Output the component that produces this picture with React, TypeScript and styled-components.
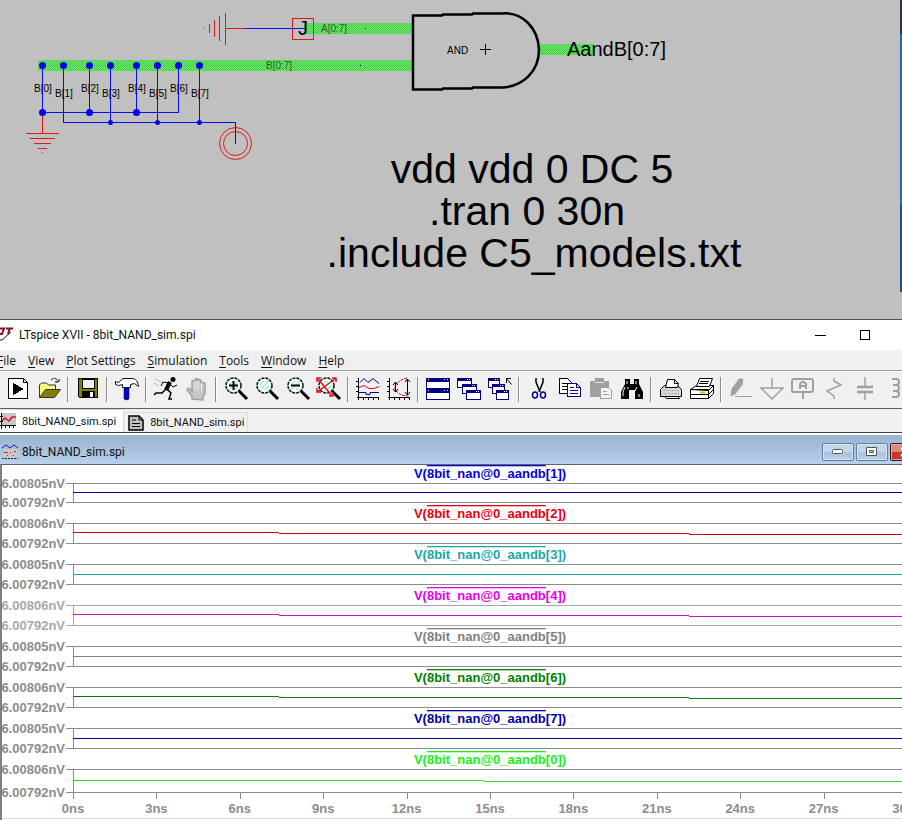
import React from "react";
import styled, { createGlobalStyle } from "styled-components";

const GlobalStyle = createGlobalStyle`
  * { box-sizing: border-box; }
  body { margin: 0; background: #f0f0f0; overflow: hidden; }
`;

const uiFont = '"Open Sans", "Noto Sans", sans-serif';
const docFont = 'Roboto, "Open Sans", sans-serif';
const plotFont = '"Liberation Sans", Arial, sans-serif';

const Screen = styled.div`
  display: flex;
  flex-direction: column;
  min-height: 100vh;
  overflow: hidden;
  font-family: ${uiFont};
  font-size: 12px;
  color: #111;
`;

/* ---------- Schematic ---------- */

const SchematicRow = styled.section`
  display: flex;
  height: 319px;
  background: #c0c0c0;
`;

const SchematicSvg = styled.svg`
  flex: 1;
  min-width: 0;
  height: 100%;
  font-family: ${plotFont};
`;

const DesktopEdge = styled.div`
  flex: none;
  width: 2px;
  height: 292px;
  background: linear-gradient(#24364e 0 34px, #1d6ea5 34px 205px, #1a4f86 205px);
`;

const topTaps = [
  { x: 42, label: "B[0]", low: false },
  { x: 63, label: "B[1]", low: true },
  { x: 89, label: "B[2]", low: false },
  { x: 110, label: "B[3]", low: true },
  { x: 136, label: "B[4]", low: false },
  { x: 157, label: "B[5]", low: true },
  { x: 178, label: "B[6]", low: false },
  { x: 199, label: "B[7]", low: true },
];

function Schematic() {
  return (
    <SchematicRow>
      <SchematicSvg role="img" aria-label="8-bit AND schematic">
        <defs>
          <pattern id="bus" width="2" height="2" patternUnits="userSpaceOnUse">
            <rect width="2" height="2" fill="#84d884" />
            <rect width="1" height="1" fill="#34dc34" />
            <rect x="1" y="1" width="1" height="1" fill="#34dc34" />
          </pattern>
        </defs>
        <rect x="304" y="23" width="109" height="11" fill="url(#bus)" />
        <rect x="38" y="60" width="375" height="11" fill="url(#bus)" />
        <rect x="538" y="44" width="56" height="11" fill="url(#bus)" />

        <g fill="none" stroke="#e01818" shapeRendering="crispEdges">
          <path d="M204 28.500h1M209.500 24v9M214.500 20v17M219.500 16v25M225.500 13v32M226 28.500h19" />
          <rect x="292.500" y="18.500" width="21" height="21" />
          <path d="M42.500 114v19M26 133.500h33M30 138.500h25M34 143.500h17M38 148.500h9M42 152.500h1" />
        </g>
        <g fill="none" stroke="#e01818">
          <circle cx="235.500" cy="143.500" r="16" />
          <circle cx="235.500" cy="143.500" r="12" />
        </g>
        <g fill="none" stroke="#0a0af0" shapeRendering="crispEdges">
          <path d="M245 28.500h60" />
          <path d="M42.500 65v48M89.500 65v48M136.500 65v48M178.500 65v47.500H42" />
          <path d="M110.500 65v57M157.500 65v57M199.500 65v57M63.500 65v57.500H235.500V144" />
        </g>
        <g fill="#0000f4">
          {topTaps.map((t) => (
            <circle key={t.label} cx={t.x + 0.5} cy="65.500" r="3.500" />
          ))}
          {[42, 89, 136].map((x) => (
            <circle key={x} cx={x + 0.5} cy="112.500" r="3.500" />
          ))}
          {[110, 157, 199].map((x) => (
            <circle key={x} cx={x + 0.5} cy="122.500" r="2.500" />
          ))}
        </g>

        <path
          d="M413 15.500h29l1-1h29l1-1h29c20-2 36 14 37 36c0 22-16 37-37 38h-29l-1 1h-29l-1 1h-29z"
          fill="none"
          stroke="#000"
          strokeWidth="2.500"
        />
        <path d="M480 49.500h11M485.500 44v11" stroke="#000" shapeRendering="crispEdges" />

        <g fontSize="10">
          {topTaps.map((t) => (
            <text key={t.label} x={t.x + 1} y={t.low ? 97 : 92} textAnchor="middle">
              {t.label}
            </text>
          ))}
          <text x="447" y="54">AND</text>
          <text x="321" y="32" fillOpacity="0.600">A[0:7]</text>
          <text x="266" y="69" fillOpacity="0.600">B[0:7]</text>
          <rect x="365" y="28" width="1" height="1" />
          <rect x="360" y="65" width="1" height="1" />
        </g>
        <text x="303" y="35" fontSize="20" textAnchor="middle">J</text>
        <text x="567" y="56" fontSize="20">AandB[0:7]</text>
        <g fontSize="41" textAnchor="middle">
          <text x="532" y="183">vdd vdd 0 DC 5</text>
          <text x="527" y="225">.tran 0 30n</text>
          <text x="534" y="267">.include C5_models.txt</text>
        </g>
      </SchematicSvg>
      <DesktopEdge />
    </SchematicRow>
  );
}

/* ---------- Application window chrome ---------- */

const AppWindow = styled.main`
  flex: 1;
  display: flex;
  flex-direction: column;
  border-top: 1px solid #505050;
  background: #f0f0f0;
`;

const TitleBar = styled.header`
  display: flex;
  align-items: center;
  height: 30px;
  background: #fff;
`;

const AppTitle = styled.h1`
  flex: 1;
  margin: 0 0 0 5px;
  font: 400 12px ${docFont};
`;

const WindowButtons = styled.div`
  display: flex;
  margin-right: -31px;
`;

const WindowButton = styled.button`
  display: flex;
  align-items: center;
  justify-content: center;
  width: 45px;
  height: 28px;
  padding: 0;
  border: 0;
  background: none;
`;

const MenuBar = styled.nav`
  display: flex;
  align-items: center;
  gap: 12px;
  height: 20px;
  margin-left: -3px;
`;

const MenuButton = styled.button`
  padding: 0;
  border: 0;
  background: none;
  color: inherit;
  font: inherit;
  u { text-underline-offset: 2px; }
`;

const ToolBar = styled.div`
  display: flex;
  align-items: flex-start;
  height: 39px;
  padding: 6px 0 0 2px;
  overflow: hidden;
  border-top: 1px solid #a0a0a0;
  border-bottom: 1px solid #606060;
  box-shadow: inset 0 1px #fff;
`;

const ToolButton = styled.button`
  flex: none;
  display: flex;
  width: 31px;
  padding: 0 3px 0 4px;
  border: 0;
  background: none;
  svg { width: 24px; height: 24px; overflow: visible; }
`;

const ToolSeparator = styled.span`
  flex: none;
  width: 8px;
  height: 25px;
  background: linear-gradient(90deg, transparent 3px, #8a8a8a 3px 4px, #fff 4px 5px, transparent 5px);
`;

const TabStrip = styled.div`
  display: flex;
  align-items: flex-end;
  height: 24px;
  border-bottom: 1px solid #404040;
`;

const Tab = styled.button<{ $active?: boolean }>`
  display: flex;
  align-items: center;
  gap: 6px;
  height: ${(p) => (p.$active ? 23 : 20)}px;
  padding: 0 ${(p) => (p.$active ? 7 : 3)}px 0 ${(p) => (p.$active ? 0 : 4)}px;
  border: 0;
  border-right: 1px solid #dcdcdc;
  border-top: 1px solid #dcdcdc;
  background: ${(p) => (p.$active ? "#fff" : "#f0f0f0")};
  color: inherit;
  font: 11px ${docFont};
`;

const Glyph = styled.svg`
  flex: none;
  width: 16px;
  height: 16px;
`;

const DocTitleBar = styled.header`
  display: flex;
  align-items: center;
  gap: 4px;
  height: 31px;
  padding: 4px 0 0 2px;
  border-top: 2px solid #fff;
  overflow: hidden;
  background: linear-gradient(#99b4d1, #b9d1ea);
`;

const DocTitle = styled.h2`
  flex: 1;
  margin: 0;
  font: 400 12px ${docFont};
`;

const DocButtons = styled.div`
  display: flex;
  gap: 2px;
  margin-right: -20px;
`;

const DocButton = styled.button<{ $danger?: boolean }>`
  display: flex;
  align-items: center;
  justify-content: center;
  width: 32px;
  height: 18px;
  padding: 0;
  border: 1px solid ${(p) => (p.$danger ? "#43161a" : "#5f7f9f")};
  border-radius: 2px;
  box-shadow: inset 0 0 0 1px ${(p) => (p.$danger ? "#e6a89c" : "#d8e6f4")};
  background: ${(p) =>
    p.$danger
      ? "linear-gradient(#dc8b7b 50%, #c0392b 50%)"
      : "linear-gradient(#c2d6ea 50%, #a6c1dd 50%, #b8d0e8)"};
`;

/* ---------- Icons ---------- */

const NAVY = "#000080";
const GREY = "#a0a0a0";

function Lens({ children }: { children?: React.ReactNode }) {
  return (
    <>
      <path d="M15 14l8 8" stroke="#000" strokeWidth="3" />
      <circle cx="9.500" cy="8.500" r="7.500" fill="#eefcfc" stroke="#111" strokeWidth="1.500" strokeDasharray="3 1" />
      <path d="M5 8l4-4M6 12l8-8M10 13l4-4" stroke="#7fdede" strokeWidth="1" />
      {children}
    </>
  );
}

const MiniWindow = ({ x, y, w = 14 }: { x: number; y: number; w?: number }) => (
  <g shapeRendering="crispEdges">
    <rect x={x + 0.5} y={y + 0.5} width={w} height="9" fill="#fff" stroke={NAVY} />
    <rect x={x} y={y} width={w + 1} height="3" fill={NAVY} />
    <path d={`M${x + w - 4} ${y + 1.5}h1m1 0h1`} stroke="#fff" />
  </g>
);

const icons: Record<string, React.ReactNode> = {
  run: (
    <g shapeRendering="crispEdges">
      <path d="M2.500 1.500h15l4 4v16h-19z" fill="#fff" stroke="#000" />
      <path d="M17.500 1.500v4h4" fill="none" stroke="#000" />
      <path d="M7 6v12l11-6z" fill="#000" />
    </g>
  ),
  open: (
    <>
      <path d="M2.500 20.500V8l2-2h5l2 2h7v4" fill="#ffff80" stroke="#333" />
      <path d="M2.500 20.500l6-8h15l-6 8z" fill="#808000" stroke="#333" />
      <path d="M14 3c3-3 6-2 7 2M18 5h4V1" fill="none" stroke="#000" strokeDasharray="3 1" />
    </>
  ),
  save: (
    <g shapeRendering="crispEdges">
      <path d="M2.500 1.500h19v19h-18l-1-1z" fill="#808000" stroke="#000" />
      <rect x="6" y="2" width="12" height="9" fill="#eee" stroke="#000" />
      <rect x="6" y="14" width="13" height="7" />
      <rect x="14" y="15" width="3" height="5" fill="#fff" />
    </g>
  ),
  hammer: (
    <>
      <path d="M9 10h5v12q-2 2-5 0z" fill="#0000c8" stroke="#000060" strokeWidth="0.500" />
      <path d="M.5 4.500l3 1L8 1.500h9c4 0 6 3 6.500 8l-4-3-4 1v3h-8v-3l-4 1-3-1z" fill="#fff" stroke="#111" />
    </>
  ),
  runner: (
    <>
      <circle cx="19" cy="2.500" r="2.500" />
      <path d="M16 5l-4 8" stroke="#000" strokeWidth="4" />
      <path d="M13 12l4 4-2 6h3M12 12l-4 4H2l-2 2" fill="none" stroke="#000" strokeWidth="1.500" />
      <path d="M15 6l-6-1-2 4M16 7l3 3 4-2" fill="none" stroke="#000" />
      <path d="M1 2l6 3M0 6l5 3" stroke="#999" strokeDasharray="2 1" />
    </>
  ),
  hand: (
    <>
      <path
        d="M7 22v-3l-5-6c0-2 2-2 3-1l2 2V5c0-2 3-2 3 0V3c0-2 3-2 3 0v1c0-2 3-2 3 0v3c0-2 4-2 4 0v9l-2 4v3z"
        fill="#c8c8c8"
        stroke={GREY}
        strokeWidth="1.500"
      />
      <path d="M10 4v9M13 4v9M16.500 6v7" stroke="#eee" />
    </>
  ),
  zoomIn: <Lens><path d="M5 8.500h9M9.500 4v9" stroke="#000" strokeWidth="2" /></Lens>,
  zoom: <Lens />,
  zoomOut: <Lens><path d="M5 8.500h9" stroke="#000" strokeWidth="2" /></Lens>,
  zoomFit: <Lens><path d="M1 2l14 17M18 2L0 15M0 5V1h4M15 1h4v4M0 11v4h4M16 15v4h-4" fill="none" stroke="#e01020" strokeWidth="1.500" /></Lens>,
  plot: (
    <>
      <path d="M2.500 1v22M1 20.500h22M0 4.500h3M0 9.500h3M0 14.500h3M7.500 20v3M12.500 20v3M17.500 20v3M22.500 20v3" stroke="#000" shapeRendering="crispEdges" />
      <path d="M4 5.500l4-4 4 4 5-4 6 5" fill="none" stroke={NAVY} />
      <path d="M3 10.500l5-2 5 3h5l5-2" fill="none" stroke="#e01020" />
      <path d="M3 15.500h7v2h4v-2h9" fill="none" stroke={NAVY} />
    </>
  ),
  plotFit: (
    <>
      <path d="M2.500 1v22M1 20.500h22M0 4.500h3M0 9.500h3M0 14.500h3M7.500 20v3M12.500 20v3M17.500 20v3M22.500 20v3" stroke="#000" shapeRendering="crispEdges" />
      <path d="M20 1l-6 2-6 5v5l6 5 7 1" fill="none" stroke="#e01020" strokeDasharray="3 1" />
      <path d="M20.500 2v16M18 5l2.500-3L23 5M18 15l2.500 3 2.500-3M8.500 5v10M6 8l2.500-3L11 8M6 12l2.500 3 2.500-3" fill="none" stroke="#000" />
    </>
  ),
  tile: (
    <g shapeRendering="crispEdges">
      {[1, 12].map((y) => (
        <g key={y}>
          <rect x=".5" y={y + 0.5} width="23" height="10" fill="#fff" stroke={NAVY} />
          <rect x="0" y={y} width="24" height="4" fill={NAVY} />
          <path d={`M2 ${y + 1.5}h1M18 ${y + 1.5}h1m2 0h1`} stroke="#fff" />
        </g>
      ))}
    </g>
  ),
  cascade: <><MiniWindow x={0} y={1} /><MiniWindow x={5} y={7} /><MiniWindow x={9} y={13} /></>,
  cascadeNew: (
    <>
      <MiniWindow x={0} y={1} w={11} /><MiniWindow x={4} y={7} w={12} /><MiniWindow x={8} y={13} w={12} />
      <path d="M18.500 6V1.500H23M18.500 1.500l5 6" fill="none" stroke="#000" />
    </>
  ),
  cut: (
    <>
      <path d="M9 1v4l4 10M16 1v4l-4 10" fill="none" stroke="#000" strokeWidth="1.500" />
      <ellipse cx="8" cy="18" rx="2.500" ry="3" fill="none" stroke={NAVY} strokeWidth="1.500" />
      <ellipse cx="16" cy="18" rx="2.500" ry="3" fill="none" stroke={NAVY} strokeWidth="1.500" />
    </>
  ),
  copy: (
    <g shapeRendering="crispEdges" fill="#fff">
      <path d="M1.500 1.500h8l4 4v11h-12z" stroke="#000" />
      <path d="M4 6.500h5M4 9.500h5M4 12.500h5" stroke="#000" />
      <path d="M9.500 6.500h9l4 4v9h-13zM18.500 6.500v4h4" stroke={NAVY} />
      <path d="M12 10.500h4M12 13.500h8M12 16.500h8" stroke={NAVY} />
    </g>
  ),
  paste: (
    <g shapeRendering="crispEdges">
      <path d="M1 4h5V1h9v3h5v16H1z" fill={GREY} />
      <path d="M6 5.500h9" stroke="#e8e8e8" />
      <path d="M11.500 10.500h8l3 3v8h-11z" fill="#f4f4f4" stroke={GREY} />
      <path d="M14 14.500h4M14 17.500h6" stroke={GREY} />
    </g>
  ),
  find: (
    <>
      <path d="M5 2h5v5h4V2h5v5l4 8v7h-8v-9h-6v9H1v-7l4-8z" />
      <path d="M7 4v3M16 4v3M5 10l-2 5v4M17 10l-2 4M8 10v2M19 17v3" stroke="#fff" />
    </>
  ),
  print: (
    <g stroke="#000">
      <path d="M1.500 19.500v-7l4-4h13l4 4v7z" fill="#d8d8d8" />
      <path d="M6.500 10.500l2-8h7l4 4-1 4z" fill="#fff" />
      <path d="M15.500 2.500v4h4" fill="none" />
      <path d="M5.500 19.500h13l2 2h-13z" fill="#fff" />
      <path d="M3 13.500h18M3 16.500h18" stroke="#999" strokeDasharray="1 1" />
    </g>
  ),
  printSetup: (
    <g stroke="#000" fill="#fff">
      <path d="M.5 12.500l6-4h17l-5 5zM.5 12.500v9h18v-9zM18.500 13.500l5-5v8l-5 5z" />
      <path d="M6.500 9.500l3-8h13l-3 8z" />
      <path d="M10 4.500h9M9 6.500h9M.5 17.500h18l5-5" fill="none" />
      <path d="M10 15.500h5" stroke="#c8c800" strokeWidth="2" />
    </g>
  ),
  pencil: (
    <>
      <path d="M2 19l1-7 7-10h4l-1 6-7 9z" fill={GREY} stroke={GREY} />
      <path d="M6 19.500h17" stroke={GREY} />
    </>
  ),
  ground: <path d="M12 1v10M0 11h24M1 11l11 11 11-11" fill="none" stroke={GREY} strokeWidth="1.500" />,
  netLabel: (
    <g fill="none" stroke={GREY} strokeWidth="2">
      <rect x="1" y="2" width="21" height="13" rx="2" />
      <path d="M12 15v7M9 12V7l2-2h2l2 2v5M9 9h6" />
    </g>
  ),
  resistor: <path d="M12 1v3l7 4-14 6 7 5v3" fill="none" stroke={GREY} strokeWidth="1.500" />,
  capacitor: (
    <g fill="none" stroke={GREY}>
      <path d="M4 10h16M4 15h16" strokeWidth="2.500" />
      <path d="M12 0v9M12 16v7" strokeWidth="1.500" />
    </g>
  ),
  inductor: <path d="M8 2h4c4 0 4 6 0 6H9h3c4 0 4 6 0 6H9h3c4 0 4 6 0 6H8" fill="none" stroke={GREY} strokeWidth="2" />,
};

const toolGroups = [
  ["run", "open"],
  ["save"],
  ["hammer"],
  ["runner", "hand"],
  ["zoomIn", "zoom", "zoomOut", "zoomFit"],
  ["plot", "plotFit"],
  ["tile", "cascade", "cascadeNew"],
  ["cut", "copy", "paste", "find"],
  ["print", "printSetup"],
  ["pencil", "ground", "netLabel", "resistor", "capacitor", "inductor"],
];

const menus = ["File", "View", "Plot Settings", "Simulation", "Tools", "Window", "Help"];

const AppLogo = styled.svg`
  flex: none;
  width: 14px;
  height: 20px;
`;

/* ---------- Waveform plot ---------- */

const PlotFrame = styled.section`
  flex: 1;
  overflow: hidden;
  border-top: 1px solid #646464;
  border-left: 2px solid #808080;
  background: #fff;
`;

const PlotSvg = styled.svg`
  display: block;
  width: calc(100% + 7px);
  height: 354px;
  margin-left: -2px;
  font: bold 13px ${plotFont};
`;

const PlotArea = styled.svg`
  width: calc(100% - 73px);
  overflow: visible;
`;

const Overlined = styled.tspan`
  text-decoration: overline;
`;

interface Trace {
  bit: number;
  color: string;
  line?: string;
  top: number;
  bottom: number;
  max: string;
  value: number;
  steps: number[];
  faint?: boolean;
}

const traces: Trace[] = [
  { bit: 1, color: "#0000e0", line: "#0000a8", top: 18, bottom: 37, max: "6.00805nV", value: 27, steps: [] },
  { bit: 2, color: "#e80010", line: "#c80010", top: 58, bottom: 78, max: "6.00806nV", value: 67, steps: [24.7, 73.9] },
  { bit: 3, color: "#18a8a8", top: 99, bottom: 119, max: "6.00805nV", value: 109, steps: [] },
  { bit: 4, color: "#e800e8", line: "#c810c8", top: 140, bottom: 160, max: "6.00806nV", value: 149, steps: [24.7, 73.9], faint: true },
  { bit: 5, color: "#808080", top: 181, bottom: 201, max: "6.00805nV", value: 191, steps: [] },
  { bit: 6, color: "#008000", top: 222, bottom: 242, max: "6.00806nV", value: 231, steps: [24.7, 73.9] },
  { bit: 7, color: "#0000a0", line: "#000090", top: 263, bottom: 283, max: "6.00805nV", value: 273, steps: [] },
  { bit: 0, color: "#18f018", line: "#30dc30", top: 304, bottom: 327, max: "6.00806nV", value: 315, steps: [49.3] },
];

const AXIS = "#8c8c8c";

function TraceLayer({ trace }: { trace: Trace }) {
  const axis = trace.faint ? "#a8a8a8" : AXIS;
  const marks = [0, ...trace.steps, 100];
  return (
    <>
      <g fill={axis}>
        <text x="-8" y={trace.top + 5} textAnchor="end">{trace.max}</text>
        <text x="-8" y={trace.bottom + 5} textAnchor="end">6.00792nV</text>
      </g>
      <g fill={axis} shapeRendering="crispEdges">
        <rect x="-7" width="7" y={trace.top} height="1" />
        <rect x="-7" width="7" y={trace.bottom} height="1" />
        <rect x="0" width="100%" y={trace.top} height="1" />
        <rect x="0" width="100%" y={trace.bottom} height="1" />
        <rect x="0" width="1" y={trace.top} height={trace.bottom - trace.top} />
      </g>
      <g fill={trace.line ?? trace.color} shapeRendering="crispEdges">
        {marks.slice(1).map((end, i) => (
          <rect
            key={end}
            x={`${marks[i]}%`}
            width={`${end - marks[i]}%`}
            y={trace.value + i}
            height="1"
          />
        ))}
      </g>
      <text x="50%" y={trace.top - 5} textAnchor="middle" fill={trace.color}>
        V(<Overlined>8bit_nan@0_aandb</Overlined>[{trace.bit}])
      </text>
    </>
  );
}

function WaveformPlot() {
  return (
    <PlotFrame>
      <PlotSvg role="img" aria-label="Simulated output voltages">
        <PlotArea x="73">
          {traces.map((t) => (
            <TraceLayer key={t.bit} trace={t} />
          ))}
          {Array.from({ length: 11 }, (_, i) => (
            <g key={i} fill={AXIS}>
              <rect x={`${i * 10}%`} width="1" y="327" height="7" shapeRendering="crispEdges" />
              <text x={`${i * 10}%`} y="348" textAnchor="middle">{i * 3}ns</text>
            </g>
          ))}
          <line x1="-73" x2="100%" y1="353.500" y2="353.500" stroke="#dcdcdc" />
        </PlotArea>
      </PlotSvg>
    </PlotFrame>
  );
}

const PlotGlyph = () => (
  <Glyph viewBox="0 0 16 16">
    <rect x="2" width="14" height="12" fill="#c8c8c8" />
    <path d="M1.500 0v16M0 12.500h16M0 3.500h3M0 8.500h3M5.500 12v3M9.500 12v3M13.500 12v3" stroke="#000" />
    <path d="M2 8l3-3 4 3 3-4h4" fill="none" stroke="#e01020" strokeWidth="1.500" />
  </Glyph>
);

const NetlistGlyph = () => (
  <Glyph viewBox="0 0 16 16">
    <path d="M1 1h10l4 4v10H1z" fill="#c0c0c0" stroke="#000" strokeWidth="1.500" />
    <path d="M11 1v4h4M4 5h4M4 8.500h8M4 11.500h8" fill="none" stroke="#000" />
  </Glyph>
);

const WaveGlyph = () => (
  <Glyph viewBox="0 0 16 16">
    <rect x="2" y="5" width="14" height="9" fill="#c8c8c8" />
    <path d="M0 4l4-3 4 3 4-3 4 3" fill="none" stroke="#1414b4" />
    <path d="M2 8.500h4m2 0h1m3-1h2M5 11.500h1m5 0h1" stroke="#e01020" />
    <path d="M0 14.500h16" stroke="#222" strokeDasharray="2 1" />
  </Glyph>
);

export default function App() {
  return (
    <Screen>
      <GlobalStyle />
      <Schematic />
      <AppWindow>
        <TitleBar>
          <AppLogo viewBox="0 0 14 20">
            <path d="M0 15h2l9-8" fill="none" stroke="#111" />
            <path d="M0 3.500h4L2 9H0M6 3.500h7M10 3L8 9" fill="none" stroke="#8c0c20" strokeWidth="2" />
          </AppLogo>
          <AppTitle>LTspice XVII - 8bit_NAND_sim.spi</AppTitle>
          <WindowButtons>
            <WindowButton aria-label="Minimize">
              <svg width="11" height="11"><path d="M0 5.500h11" stroke="#000" /></svg>
            </WindowButton>
            <WindowButton aria-label="Maximize">
              <svg width="11" height="11"><rect x=".5" y=".5" width="9" height="9" fill="none" stroke="#000" /></svg>
            </WindowButton>
            <WindowButton aria-label="Close">
              <svg width="11" height="11"><path d="M0 0l11 11M11 0L0 11" stroke="#000" /></svg>
            </WindowButton>
          </WindowButtons>
        </TitleBar>
        <MenuBar>
          {menus.map((m) => (
            <MenuButton key={m}><u>{m[0]}</u>{m.slice(1)}</MenuButton>
          ))}
        </MenuBar>
        <ToolBar>
          {toolGroups.map((group, i) => (
            <React.Fragment key={group[0]}>
              {i > 0 && <ToolSeparator />}
              {group.map((name) => (
                <ToolButton key={name} aria-label={name}>
                  <svg viewBox="0 0 24 24">{icons[name]}</svg>
                </ToolButton>
              ))}
            </React.Fragment>
          ))}
        </ToolBar>
        <TabStrip>
          <Tab $active><PlotGlyph />8bit_NAND_sim.spi</Tab>
          <Tab><NetlistGlyph />8bit_NAND_sim.spi</Tab>
        </TabStrip>
        <DocTitleBar>
          <WaveGlyph />
          <DocTitle>8bit_NAND_sim.spi</DocTitle>
          <DocButtons>
            <DocButton aria-label="Minimize plot">
              <svg width="12" height="6"><rect x=".5" y=".5" width="10" height="4" rx="1" fill="#fff" stroke="#555" /></svg>
            </DocButton>
            <DocButton aria-label="Maximize plot">
              <svg width="12" height="10"><path d="M.5 .5h10v8H.5zM3.500 3.500v2h4v-2z" fill="#fff" stroke="#555" /></svg>
            </DocButton>
            <DocButton $danger aria-label="Close plot">
              <svg width="12" height="10"><path d="M1 1l9 8M10 1L1 9" stroke="#fff" strokeWidth="2" /></svg>
            </DocButton>
          </DocButtons>
        </DocTitleBar>
        <WaveformPlot />
      </AppWindow>
    </Screen>
  );
}
